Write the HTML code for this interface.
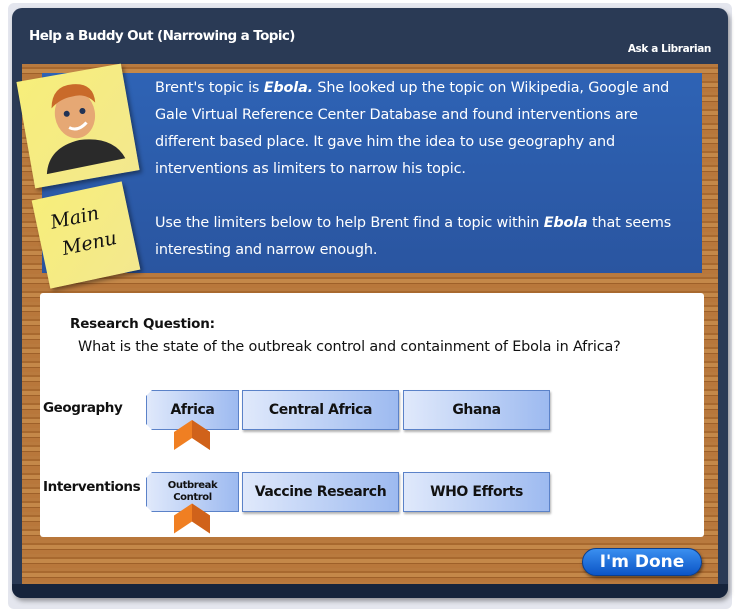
<!DOCTYPE html>
<html><head><meta charset="utf-8"><style>
*{margin:0;padding:0;box-sizing:border-box}
body{width:740px;height:612px;background:#fff;position:relative;overflow:hidden;font-family:"DejaVu Sans","Liberation Sans",sans-serif}
.shadow{position:absolute;left:8px;top:3px;width:724px;height:606px;background:#e4e6ee;border-radius:6px}
.panel{position:absolute;left:12px;top:8px;width:716px;height:590px;background:#2a3a55;border-radius:10px;box-shadow:2px 3px 5px rgba(0,0,0,.35)}
.title{position:absolute;left:29px;top:28px;color:#fff;font-weight:bold;font-size:13.5px;letter-spacing:-.6px}
.ask{position:absolute;right:29px;top:43px;color:#fff;font-weight:bold;font-size:10.5px;letter-spacing:-.4px}
.wood{position:absolute;left:22px;top:64px;width:696px;height:520px;background:repeating-linear-gradient(180deg,#b97a3e 0 3px,#a8692f 3px 5px,#c48849 5px 9px,#9e6029 9px 10px,#b8773b 10px 14px);}
.wbot{position:absolute;left:12px;top:584px;width:716px;height:14px;background:#16243c;border-radius:0 0 10px 10px}
.blue{position:absolute;left:42px;top:73px;width:660px;height:200px;background:linear-gradient(180deg,#2e63b5,#2a55a0);}
.txt{position:absolute;left:155px;top:75px;width:545px;color:#fff;font-size:14.4px;line-height:27px;letter-spacing:-.15px}
.note{position:absolute;background:linear-gradient(135deg,#f7ee7a,#f3e88e);box-shadow:2px 3px 4px rgba(0,0,0,.4)}
.white{position:absolute;left:40px;top:293px;width:664px;height:244px;background:#fff;border-radius:3px}
.rq{position:absolute;left:70px;top:316px;font-weight:bold;font-size:13.5px;color:#111;letter-spacing:-.2px}
.q{position:absolute;left:78px;top:339px;font-size:14.4px;color:#111;letter-spacing:-.15px}
.lbl{position:absolute;left:43px;font-weight:bold;font-size:13.5px;color:#111;letter-spacing:-.4px}
.b{position:absolute;height:40px;border:1px solid #5b82c8;background:linear-gradient(90deg,#e0e9fb,#9dbaf0);display:flex;align-items:center;justify-content:center;font-weight:bold;font-size:14px;letter-spacing:-.4px;color:#111;box-shadow:1px 2px 2px rgba(0,0,0,.3)}
.sel{clip-path:polygon(6px 0,100% 0,100% 100%,6px 100%,0 calc(100% - 6px),0 6px);}
.arrow{position:absolute;width:36px;height:30px}
.done{position:absolute;left:582px;top:548px;width:120px;height:28px;border-radius:14px;background:linear-gradient(180deg,#3a8ff0,#0c55c6);border:1px solid #0a3e8e;color:#fff;font-weight:bold;font-size:17px;text-align:center;line-height:26px;box-shadow:1px 2px 3px rgba(0,0,0,.5)}
</style></head><body>
<div class="shadow"></div>
<div class="panel"></div>
<div class="title">Help a Buddy Out (Narrowing a Topic)</div>
<div class="ask">Ask a Librarian</div>
<div class="wood"></div>
<div class="wbot"></div>
<div class="blue"></div>
<div class="txt">Brent's topic is <b><i>Ebola.</i></b> She looked up the topic on Wikipedia, Google and Gale Virtual Reference Center Database and found interventions are different based place. It gave him the idea to use geography and interventions as limiters to narrow his topic.<br><br>Use the limiters below to help Brent find a topic within <b><i>Ebola</i></b> that seems interesting and narrow enough.</div>
<div class="note" style="left:25px;top:72px;width:106px;height:108px;transform:rotate(-10deg)">
<svg width="106" height="108" viewBox="0 0 106 108"><ellipse cx="52" cy="42" rx="20" ry="24" fill="#e6a874"/><path d="M30 32 Q34 10 55 12 Q76 14 74 34 Q66 22 52 24 Q40 24 30 32Z" fill="#c96a2a"/><path d="M14 96 Q20 70 52 68 Q86 70 94 94Z" fill="#2a2a2a"/><circle cx="44" cy="40" r="3" fill="#235"/><circle cx="60" cy="40" r="3" fill="#235"/><path d="M44 54 Q52 60 62 52" stroke="#fff" stroke-width="3" fill="none"/></svg></div>
<div class="note" style="left:40px;top:190px;width:92px;height:90px;transform:rotate(-12deg);font-family:'DejaVu Serif',serif;font-style:italic;font-size:19px;line-height:28px;padding:12px 0 0 14px;color:#111">Main<br>&nbsp;Menu</div>
<div class="white"></div>
<div class="rq">Research Question:</div>
<div class="q">What is the state of the outbreak control and containment of Ebola in Africa?</div>
<div class="lbl" style="top:400px">Geography</div>
<div class="lbl" style="top:479px">Interventions</div>
<div class="b sel" style="left:146px;top:390px;width:93px">Africa</div>
<div class="b" style="left:242px;top:390px;width:157px">Central Africa</div>
<div class="b" style="left:403px;top:390px;width:147px">Ghana</div>
<div class="b sel" style="left:146px;top:472px;width:93px;font-size:10px;line-height:12px;text-align:center">Outbreak<br>Control</div>
<div class="b" style="left:242px;top:472px;width:157px">Vaccine Research</div>
<div class="b" style="left:403px;top:472px;width:147px">WHO Efforts</div>
<svg class="arrow" style="left:174px;top:420px" viewBox="0 0 36 30"><path d="M0 12 L18 0 L36 12 L36 30 L18 18 L0 30Z" fill="#f07f22"/><path d="M18 0 L36 12 L36 30 L18 18Z" fill="#d0621a"/></svg>
<svg class="arrow" style="left:174px;top:502px;height:33px" viewBox="0 0 36 30"><path d="M0 12 L18 0 L36 12 L36 30 L18 18 L0 30Z" fill="#f07f22"/><path d="M18 0 L36 12 L36 30 L18 18Z" fill="#d0621a"/></svg>
<div class="done">I'm Done</div>
</body></html>
